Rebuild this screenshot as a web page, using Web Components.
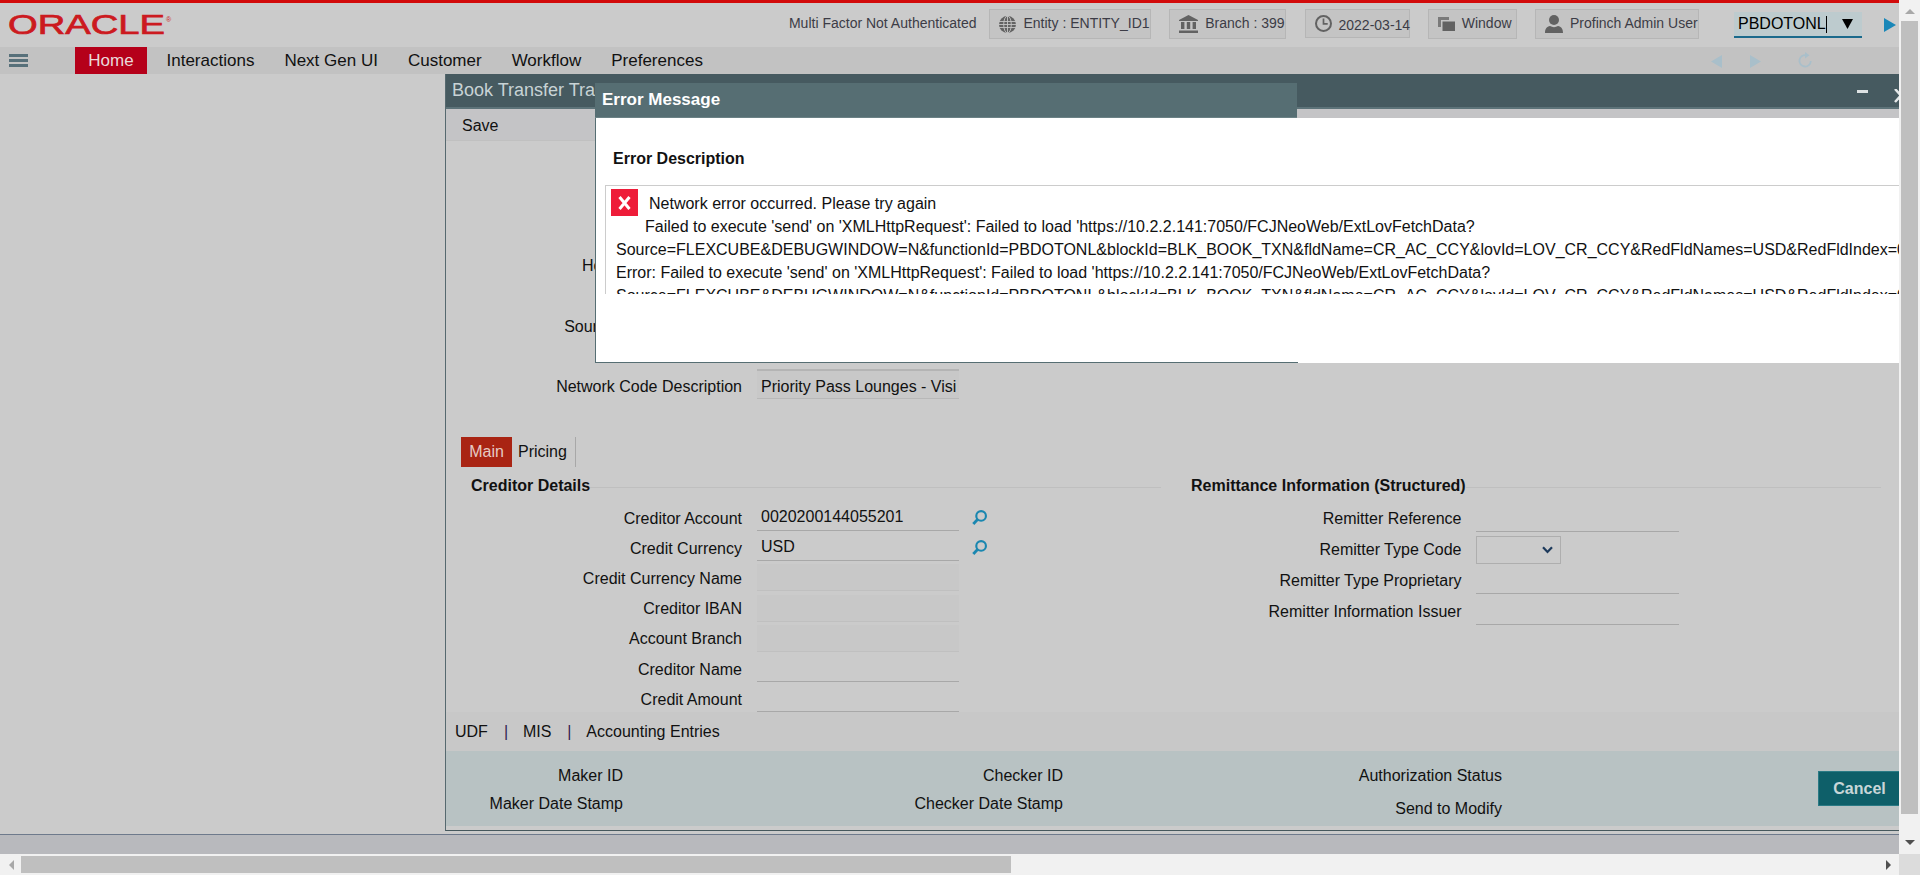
<!DOCTYPE html>
<html lang="en">
<head>
<meta charset="utf-8">
<title>Book Transfer</title>
<style>html,body{margin:0;padding:0;overflow:hidden;background:#cbcbcb}</style>
</head>
<body>
<ora-app>
  <ora-header>
    <ora-chip style="width:162px;gap:7.500px"><svg slot="icon" width="17" height="17" viewBox="0 0 17 17"><circle cx="8.5" cy="8.5" r="8.5" fill="#626262"/><g fill="none" stroke="#c4c4c4" stroke-width=".9"><ellipse cx="8.5" cy="8.5" rx="3.8" ry="8.5"/><path d="M8.5 0v17M0 5.5h17M0 8.5h17M0 11.5h17"/></g></svg>Entity : ENTITY_ID1</ora-chip>
    <ora-chip style="width:117px"><svg slot="icon" width="19" height="18" viewBox="0 0 19 18"><path fill="#626262" d="M9.5 0L19 5v1H0V5zM2 7h3.4v7H2zM7.8 7h3.4v7H7.8zM13.6 7H17v7h-3.4zM0 15.5h19V18H0z"/></svg>Branch : 399</ora-chip>
    <ora-chip low style="width:105px"><svg slot="icon" width="17" height="17" viewBox="0 0 17 17"><circle cx="8.5" cy="8.5" r="7.5" fill="none" stroke="#626262" stroke-width="2"/><path d="M8.5 3.5v5.4h4.2" fill="none" stroke="#626262" stroke-width="1.7"/></svg>2022-03-14</ora-chip>
    <ora-chip style="width:89px"><svg slot="icon" width="17" height="14" viewBox="0 0 17 14"><path fill="#7a7a7a" d="M0 0h11v3H3v7H0z"/><path fill="#626262" d="M4.5 4.5H17V14H4.5z"/></svg>Window</ora-chip>
    <ora-chip style="width:164px"><svg slot="icon" width="18" height="18" viewBox="0 0 18 18"><circle cx="9" cy="5" r="5" fill="#626262"/><path fill="#626262" d="M0 18c0-4.500 2-6.500 5-7 2.500 1.500 5.500 1.500 8 0 3 .5 5 2.500 5 7z"/></svg>Profinch Admin User</ora-chip>
    <ora-search slot="search">PBDOTONL</ora-search>
  </ora-header>
  <ora-nav>
    <ora-navitem active>Home</ora-navitem>
    <ora-navitem first>Interactions</ora-navitem>
    <ora-navitem>Next Gen UI</ora-navitem>
    <ora-navitem>Customer</ora-navitem>
    <ora-navitem>Workflow</ora-navitem>
    <ora-navitem>Preferences</ora-navitem>
  </ora-nav>
  <ora-desktop>
    <ora-window>
      <span slot="title">Book Transfer Transaction</span>
      <ora-toolbar slot="toolbar">Save</ora-toolbar>
      <ora-form>
        <ora-field slot="top" kind="none"><span slot="label">Host Code Description</span></ora-field>
        <ora-field slot="top" kind="none"><span slot="label">Source Code Description</span></ora-field>
        <ora-field slot="top" kind="top"><span slot="label">Network Code Description</span>Priority Pass Lounges - Visi</ora-field>
        <ora-tab slot="tabs" active>Main</ora-tab>
        <ora-tab slot="tabs">Pricing</ora-tab>
        <ora-section slot="left" style="--lw:296px;--iw:202px;--cg:15px;--rh:30.170px;--hp:25px;--hr:0px;--lo:1.500px">
          <span slot="head">Creditor Details</span>
          <ora-field kind="line" lookup><span slot="label">Creditor Account</span>0020200144055201</ora-field>
          <ora-field kind="line" lookup><span slot="label">Credit Currency</span>USD</ora-field>
          <ora-field kind="ro"><span slot="label">Credit Currency Name</span></ora-field>
          <ora-field kind="ro"><span slot="label">Creditor IBAN</span></ora-field>
          <ora-field kind="ro"><span slot="label">Account Branch</span></ora-field>
          <ora-field kind="line"><span slot="label">Creditor Name</span></ora-field>
          <ora-field kind="line"><span slot="label">Credit Amount</span></ora-field>
        </ora-section>
        <ora-section slot="right" style="--lw:300.500px;--iw:203px;--cg:14.500px;--rh:31px;--hp:30px;--hr:18px;--lo:0px">
          <span slot="head">Remittance Information (Structured)</span>
          <ora-field kind="line"><span slot="label">Remitter Reference</span></ora-field>
          <ora-field kind="select"><span slot="label">Remitter Type Code</span></ora-field>
          <ora-field kind="line"><span slot="label">Remitter Type Proprietary</span></ora-field>
          <ora-field kind="line"><span slot="label">Remitter Information Issuer</span></ora-field>
        </ora-section>
      </ora-form>
      <ora-links slot="links"><span>UDF</span><ora-sep>|</ora-sep><span>MIS</span><ora-sep>|</ora-sep><span>Accounting Entries</span></ora-links>
      <ora-audit slot="audit">
        <span slot="a">Maker ID</span><span slot="a">Maker Date Stamp</span>
        <span slot="b">Checker ID</span><span slot="b">Checker Date Stamp</span>
        <span slot="c">Authorization Status</span><span slot="c">Send to Modify</span>
        <span slot="btn">Cancel</span>
      </ora-audit>
    </ora-window>
    <ora-dialog slot="over">
      <span slot="title">Error Message</span>
      <span slot="head">Error Description</span>
      <span slot="first">Network error occurred. Please try again</span>
      <div style="padding-left:29px">Failed to execute 'send' on 'XMLHttpRequest': Failed to load 'https://10.2.2.141:7050/FCJNeoWeb/ExtLovFetchData?</div>
      <div>Source=FLEXCUBE&amp;DEBUGWINDOW=N&amp;functionId=PBDOTONL&amp;blockId=BLK_BOOK_TXN&amp;fldName=CR_AC_CCY&amp;lovId=LOV_CR_CCY&amp;RedFldNames=USD&amp;RedFldIndex=0</div>
      <div>Error: Failed to execute 'send' on 'XMLHttpRequest': Failed to load 'https://10.2.2.141:7050/FCJNeoWeb/ExtLovFetchData?</div>
      <div>Source=FLEXCUBE&amp;DEBUGWINDOW=N&amp;functionId=PBDOTONL&amp;blockId=BLK_BOOK_TXN&amp;fldName=CR_AC_CCY&amp;lovId=LOV_CR_CCY&amp;RedFldNames=USD&amp;RedFldIndex=0</div>
    </ora-dialog>
  </ora-desktop>
  <ora-vscroll slot="vs"></ora-vscroll>
  <ora-hscroll slot="hs"></ora-hscroll>
</ora-app>
<script>
function def(name, css, html){
  customElements.define(name, class extends HTMLElement{
    constructor(){
      super();
      this.attachShadow({mode:'open'}).innerHTML='<style>'+css+'</style>'+html;
    }
  });
}
def('ora-app',`
  :host{display:grid;grid-template-columns:1899px 21px;grid-template-rows:854px 21px;width:1920px;height:875px;font:16px "Liberation Sans",Arial,sans-serif;color:#111;background:#cbcbcb;overflow:hidden}
  .main{display:flex;flex-direction:column;min-width:0;min-height:0;overflow:hidden}
  .corner{background:#dcdcdc}
`,`<div class="main"><slot></slot></div><slot name="vs"></slot><slot name="hs"></slot><div class="corner"></div>`);

def('ora-header',`
  :host{display:flex;flex:none;height:44px;border-top:3px solid #d20a0a;background:#cbcbcb;align-items:flex-start;box-sizing:content-box}
  .logo{flex:none;margin:9px 0 0 8px;display:block}
  .meta{margin-left:auto;margin-top:10px;font-size:14px;line-height:20px;color:#3c3c46;margin-right:12.500px;white-space:nowrap}
  .chips{display:flex;gap:18.250px;margin-top:6px}
  .search{margin:9px 0 0 35px}
  .go{margin:15px 3px 0 22px;flex:none}
`,`<svg class="logo" width="170" height="26" viewBox="0 0 170 26"><text x="0" y="22" font-family="Liberation Sans" font-size="27.500" textLength="157" lengthAdjust="spacingAndGlyphs" fill="#cc1a1f" stroke="#cc1a1f" stroke-width=".7">ORACLE</text><text x="158" y="10" font-family="Liberation Sans" font-size="7" fill="#cc1a1f">®</text></svg>
  <span class="meta">Multi Factor Not Authenticated</span>
  <div class="chips"><slot></slot></div>
  <div class="search"><slot name="search"></slot></div>
  <svg class="go" width="12" height="14" viewBox="0 0 12 14"><path d="M0 0l12 7-12 7z" fill="#1a87b8"/></svg>`);

def('ora-chip',`
  :host{display:flex;box-sizing:border-box;height:30px;align-items:center;gap:7px;border:1px solid #b6b6b6;background:#c4c4c4;font-size:14px;color:#3c3c46;padding:0 0 0 9px;white-space:nowrap}
  :host([low]){height:29px}
  :host([low]) .t{padding-top:4px}
  .t{padding-bottom:2px}
  .i{display:flex;flex:none}
`,`<span class="i"><slot name="icon"></slot></span><span class="t"><slot></slot></span>`);

def('ora-search',`
  :host{display:flex;box-sizing:border-box;width:128px;height:26px;background:#bdcbce;border-bottom:2px solid #1a6a8c;align-items:center;padding-left:4px;color:#000;white-space:nowrap;position:relative}
  .caret{display:inline-block;width:1px;height:17px;background:#000;margin-left:0}
  .tri{margin-left:auto;margin-right:9px;flex:none}
`,`<slot></slot><span class="caret"></span><svg class="tri" width="11" height="10" viewBox="0 0 11 10"><path d="M0 0h11L5.500 10z" fill="#000"/></svg>`);

def('ora-nav',`
  :host{display:flex;flex:none;height:27px;background:#c2c2c2;align-items:stretch;font-size:17px}
  .burger{flex:none;width:19px;margin:7px 47px 0 9px;display:flex;flex-direction:column;gap:2px}
  .burger i{display:block;height:3px;background:#57707a}
  .tools{margin-left:auto;margin-right:87px;display:flex;align-items:center;padding-top:2px}
  .tools svg{flex:none;display:block}
`,`<div class="burger"><i></i><i></i><i></i></div><slot></slot>
  <div class="tools">
   <svg width="11" height="13" viewBox="0 0 11 13"><path d="M11 0v13L0 6.500z" fill="#a9bfca"/></svg>
   <svg style="margin-left:28px" width="11" height="13" viewBox="0 0 11 13"><path d="M0 0v13l11-6.500z" fill="#a9bfca"/></svg>
   <svg style="margin-left:37px;margin-top:-3px" width="14" height="16" viewBox="0 0 14 16"><path d="M8.500 3.300A5.700 5.700 0 1 0 12.800 9" fill="none" stroke="#a9bfca" stroke-width="1.800"/><path d="M7 0l4.500 3.300L7 6.600z" fill="#a9bfca"/></svg>
  </div>`);

def('ora-navitem',`
  :host{display:flex;align-items:center;padding:1px 15px 0;white-space:nowrap;color:#111;box-sizing:border-box}
  :host([active]){width:72px;padding:1px 0 0;justify-content:center;background:#b5001a;color:#ead9da}
  :host([first]){margin-left:4.500px}
`,`<slot></slot>`);

def('ora-desktop',`
  :host{display:grid;grid-template-rows:1fr 20px;flex:1;min-height:0;position:relative;background:#cbcbcb}
  .strip{grid-row:2;background:#b8b9bd;border-top:1px solid #6e7a8c;box-sizing:border-box}
`,`<div></div><div class="strip"></div><slot></slot><slot name="over"></slot>`);

def('ora-window',`
  :host{position:absolute;left:445px;top:0;right:0;height:757px;box-sizing:border-box;display:flex;flex-direction:column;border-left:1px solid #56696f;border-bottom:1px solid #46585d;overflow:hidden;background:#cbcbcb}
  .tb{flex:none;height:35px;box-sizing:border-box;background:#465a60;border-bottom:2px solid #5d7379;display:flex;color:#c8d3d5;font-size:18px;padding:6px 0 0 6px;line-height:20px;white-space:nowrap}
  .ctl{margin-left:auto;display:flex;align-items:flex-start;height:20px}
  .min{display:block;width:11px;height:3px;background:#dde2e3;margin-top:10px}
  .x{display:block;margin:9px -9px 0 26px;flex:none}
  .gap{flex:none;height:4px}
`,`<div class="tb"><slot name="title"></slot><div class="ctl"><i class="min"></i><svg class="x" width="14" height="14" viewBox="0 0 14 14"><path d="M1 0l12 13M13 0L1 13" stroke="#e4e8e9" stroke-width="2.500" fill="none"/></svg></div></div>
  <slot name="toolbar"></slot><slot></slot><slot name="links"></slot><slot name="audit"></slot><div class="gap"></div>`);

def('ora-toolbar',`
  :host{display:flex;flex:none;height:32px;box-sizing:border-box;align-items:center;padding:2px 0 0 16px;background:#c4c4c6;border-bottom:1px solid #c0c0c0}
`,`<slot></slot>`);

def('ora-form',`
  :host{display:block;flex:1;min-height:0;background:#cbcbcb;--lw:296px;--iw:202px;--cg:15px;--rh:30px;--lo:0px}
  .top{display:flex;flex-direction:column;gap:30.500px;padding-top:110px}
  .tabs{display:flex;margin:35px 0 0 15px;height:30px}
  .cols{display:grid;grid-template-columns:715px 1fr;margin-top:9px}
`,`<div class="top"><slot name="top"></slot></div><div class="tabs"><slot name="tabs"></slot></div>
  <div class="cols"><slot name="left"></slot><slot name="right"></slot></div>`);

def('ora-tab',`
  :host{display:flex;align-items:center;box-sizing:border-box;height:30px;padding:0 8px 1px 6px;border-right:1px solid #a8a8a8;white-space:nowrap}
  :host([active]){width:51px;padding:0 0 1px;justify-content:center;background:#a92413;color:#e6cbc5;border:none}
`,`<slot></slot>`);

def('ora-section',`
  :host{display:block;min-width:0}
  .h{display:flex;align-items:center;height:20px;font-weight:bold;white-space:nowrap;padding-left:var(--hp);padding-right:var(--hr)}
  .h i{flex:1;display:block;height:1px;background:#bfbfbf;margin-top:2px}
  .rows{display:block;margin-top:7px}
`,`<div class="h"><slot name="head"></slot><i></i></div><div class="rows"><slot></slot></div>`);

def('ora-field',`
  :host{display:grid;grid-template-columns:var(--lw) var(--iw) auto;column-gap:var(--cg);height:var(--rh);align-items:center;white-space:nowrap}
  .l{text-align:right;display:block;padding-top:var(--lo)}
  .b{display:block;box-sizing:border-box;align-self:end;height:27px;margin-bottom:2px;padding:1px 0 0 4px;line-height:24px;overflow:hidden}
  :host([kind=line]) .b{border-bottom:1.500px solid #a8a8a8}
  :host([kind=ro]) .b{background:#c8c8c8;border-bottom:1px solid #c0c0c0}
  :host([kind=top]) .b{align-self:start;height:30px;margin:-3px 0 0;padding:0 0 0 4px;background:#c8c8c8;border-top:2px solid #b4b4b4;border-bottom:1px solid #b8b8b8;line-height:32px}
  :host([kind=none]) .b{visibility:hidden}
  :host([kind=select]) .b{width:85px;height:28px;margin-bottom:1px;border:1.500px solid #aeaeae;position:relative;padding:0}
  .chev{display:none}
  :host([kind=select]) .chev{display:block;position:absolute;right:7px;top:9px}
  .lk{display:none;margin-left:-2px;margin-top:-1px}
  :host([lookup]) .lk{display:block}
`,`<slot name="label" class="l"></slot><div class="b"><slot></slot><svg class="chev" width="11" height="8" viewBox="0 0 11 8"><path d="M1 1.200l4.500 4.800L10 1.200" fill="none" stroke="#1d3a5c" stroke-width="2.200"/></svg></div>
  <svg class="lk" width="15" height="15" viewBox="0 0 14 14"><circle cx="8.500" cy="5.500" r="4.500" fill="none" stroke="#1a87b0" stroke-width="2"/><path d="M5.200 8.800L1.200 13" stroke="#1a87b0" stroke-width="2.600" fill="none"/></svg>`);

def('ora-links',`
  :host{display:flex;flex:none;height:39px;align-items:center;padding:1px 0 0 9px;box-sizing:border-box;background:#c8c8c8;white-space:nowrap}
`,`<slot></slot>`);

def('ora-sep',`
  :host{display:block;margin:0 15px 0 16px;width:4px;color:#33204f}
`,`<slot></slot>`);

def('ora-audit',`
  :host{display:flex;flex:none;height:75px;background:#b8c2c3;white-space:nowrap;box-sizing:border-box}
  .c{display:flex;flex-direction:column;align-items:flex-end;padding-top:15px;line-height:20px;flex:none;box-sizing:border-box}
  .a{width:177px;gap:8px}
  .b{width:440px;gap:8px}
  .d{width:439px;gap:13px}
  .btn{margin:20px 0 0 auto;width:81px;height:35px;box-sizing:border-box;background:#0e5f69;border:1px solid #2a7a85;border-right:none;color:#c8d6d8;font-weight:bold;display:flex;align-items:center;justify-content:center;padding:0 0 0 1px}
`,`<div class="c a"><slot name="a"></slot></div><div class="c b"><slot name="b"></slot></div><div class="c d"><slot name="c"></slot></div><div class="btn"><slot name="btn"></slot></div>`);

def('ora-dialog',`
  :host{position:absolute;left:595px;top:9px;right:0;height:280px;display:block;white-space:nowrap;overflow:hidden}
  .tb{width:702px;height:35px;box-sizing:border-box;background:#566e73;border-bottom:1px solid #6b8286;color:#fff;font-size:17px;font-weight:bold;line-height:22px;padding:6px 0 0 7px}
  .body{height:245px;box-sizing:border-box;background:#fff;border-left:1px solid #566e73;position:relative;padding:30px 0 0 17px}
  .line{position:absolute;left:0;bottom:0;width:702px;height:1px;background:#566e73}
  .head{font-weight:bold;line-height:22px;height:22px;color:#111}
  .box{margin:15px 0 0 -8px;height:109px;box-sizing:border-box;border-top:1.500px solid #cccccc;border-left:1.500px solid #cccccc;overflow:hidden;padding:6px 0 0 10px;line-height:23px;color:#111}
  .first{display:flex;height:23px}
  .ic{flex:none;width:27px;height:27px;background:#ee1c39;margin:-3px 11px 0 -5px;display:flex;align-items:center;justify-content:center}
`,`<div class="tb"><slot name="title"></slot></div>
  <div class="body"><div class="head"><slot name="head"></slot></div>
   <div class="box"><div class="first"><span class="ic"><svg width="13" height="14" viewBox="0 0 13 14"><path d="M1.500 1l10 12M11.500 1l-10 12" stroke="#fff" stroke-width="3" fill="none"/></svg></span><slot name="first"></slot></div><slot></slot></div>
   <i class="line"></i></div>`);

def('ora-vscroll',`
  :host{display:flex;flex-direction:column;align-items:center;background:#f1f1f1;position:relative}
  .up{width:0;height:0;border:5px solid transparent;border-top:0;border-bottom:5px solid #a8a8a8;margin-top:9px}
  .th{width:17px;height:793px;background:#bfbfbf;margin-top:7px}
  .dn{width:0;height:0;border:5px solid transparent;border-bottom:0;border-top:5px solid #505050;margin-top:26px}
`,`<i class="up"></i><i class="th"></i><i class="dn"></i>`);

def('ora-hscroll',`
  :host{display:flex;align-items:center;background:#f1f1f1;grid-row:2;grid-column:1}
  .l{width:0;height:0;border:5px solid transparent;border-left:0;border-right:5px solid #a8a8a8;margin-left:9px}
  .th{width:990px;height:17px;background:#bfbfbf;margin-left:7px}
  .r{width:0;height:0;border:5px solid transparent;border-right:0;border-left:5px solid #505050;margin-left:auto;margin-right:8px}
`,`<i class="l"></i><i class="th"></i><i class="r"></i>`);
</script>
</body>
</html>
